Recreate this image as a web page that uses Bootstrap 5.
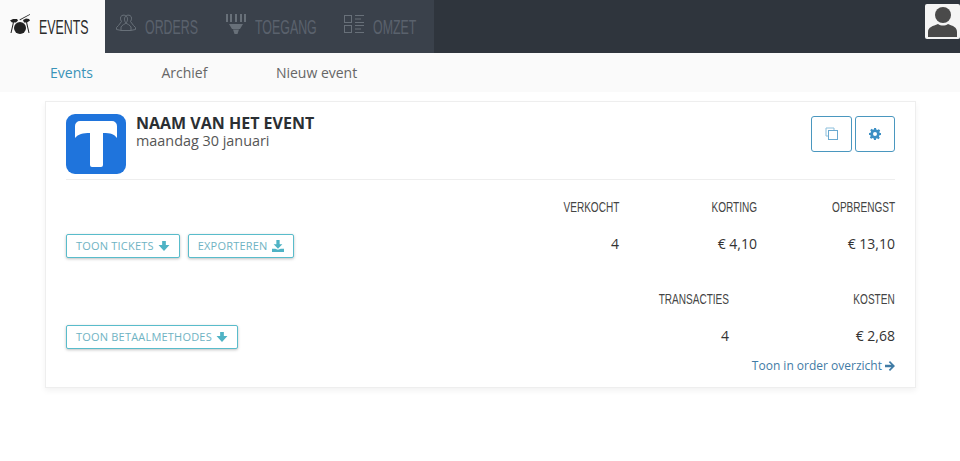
<!DOCTYPE html>
<html lang="nl">
<head>
    <meta charset="UTF-8">
    <meta name="viewport" content="width=device-width, initial-scale=1.0">
    <title>Events</title>
    <link rel="stylesheet" href="https://cdn.jsdelivr.net/npm/bootstrap@5.3.3/dist/css/bootstrap.min.css">
    <style>
        body {
            font-family: "Open Sans", "Liberation Sans", sans-serif;
            font-size: 14px;
            color: #333;
            background: #fff;
            height: 461px;
            overflow: hidden;
        }
        /* no condensed font installed, so squeeze Liberation Sans */
        .tab-label {
            display: block;
            font-family: "Liberation Sans", sans-serif;
            font-size: 21px;
            text-transform: uppercase;
            white-space: nowrap;
            transform: scaleX(.59);
            transform-origin: left center;
        }
        .label-events { width: 50px; }
        .label-orders { width: 54px; }
        .label-toegang { width: 62px; }
        .label-omzet { width: 45px; }
        .stat-label {
            display: inline-block;
            font-family: "Liberation Sans", sans-serif;
            font-size: 15px;
            line-height: 18px;
            color: #444;
            text-transform: uppercase;
            white-space: nowrap;
            transform: scaleX(.67);
            transform-origin: right center;
        }
        .top-bar {
            height: 53px;
            background: #2f353d;
        }
        .top-tabs {
            background: #3a414b;
        }
        .top-tab {
            height: 53px;
            color: #5a626d;
            text-decoration: none;
            padding: 0 16px 0 11px;
            gap: 9px;
        }
        .top-tab.is-active {
            background: #fafafa;
            color: #2b2b2b;
            width: 105px;
            padding-left: 10px;
        }
        .top-tab svg {
            margin-top: -6px;
            flex: none;
        }
        .avatar {
            width: 35px;
            height: 35px;
            background: #f5f5f5;
            border-radius: 2px;
            margin: 4px 0 0 auto;
        }
        .sub-bar {
            height: 39px;
            background: #fafafa;
            padding-left: 50px;
            gap: 68.5px;
        }
        .sub-bar a {
            color: #666;
            text-decoration: none;
        }
        .sub-bar a.is-active {
            color: #3a93b8;
        }
        .event-card {
            width: 871px;
            height: 287px;
            margin: 9px 0 0 45px;
            padding: 12px 20px 0;
            border: 1px solid #eee;
            box-shadow: 0 3px 6px rgba(0, 0, 0, .05);
        }
        .event-head {
            height: 66px;
            border-bottom: 1px solid #eee;
        }
        .event-logo {
            width: 60px;
            height: 60px;
            border-radius: 9px;
            background: #1f74dc;
        }
        .event-logo svg {
            margin-top: -1px;
        }
        .event-title {
            margin-left: 10px;
        }
        .event-name {
            font-size: 16px;
            font-weight: 700;
            line-height: 19px;
            color: #2b2f33;
        }
        .event-date {
            font-size: 14.4px;
            line-height: 16px;
            color: #555;
        }
        .head-actions {
            gap: 3px;
        }
        .square-btn {
            width: 41px;
            height: 36px;
            border: 1px solid #4a97bf;
            border-radius: 3px;
            background: #fff;
            margin-top: 2px;
        }
        .square-btn:last-child {
            width: 40px;
        }
        .teal-btn {
            height: 24px;
            padding: 0 9px;
            font-size: 11px;
            letter-spacing: .2px;
            color: #6fb3c3;
            background: #fff;
            border: 1px solid #59bccb;
            border-radius: 2px;
            box-shadow: 0 1px 3px rgba(0, 0, 0, .25);
            gap: 4px;
        }
        .stat-value {
            line-height: 18px;
            margin-top: 18px;
            padding-bottom: 5px;
        }
        .stat-col {
            width: 138px;
        }
        .stat-col-wide {
            width: 166px;
        }
        .row-one {
            margin-top: 16px;
        }
        .row-two {
            margin-top: 30px;
        }
        .row-two .stat-value {
            padding-bottom: 4px;
        }
        .order-link {
            font-size: 12px;
            line-height: 18px;
            color: #3f7ba5;
            text-decoration: none;
            margin-top: 8px;
            gap: 3px;
        }
    </style>
</head>
<body>

<nav class="top-bar d-flex">
    <div class="top-tabs d-flex">
        <a class="top-tab is-active d-flex align-items-center" href="#">
            <svg width="20" height="20" viewBox="0 0 20 20" fill="#222">
                <path d="M0 6.500L3 5h4l1 1.500L6 8.500H2z"/>
                <path d="M13 6l3-1.500 3 .5 1 1.500-3 2h-3z"/>
                <path d="M9.500 5.500L20 0l.2.700L10 6.300z"/>
                <circle cx="10" cy="14" r="6"/>
                <path d="M3 8l1 .3L1.500 19H.5zM17 8l-1 .3L18.500 19h1z"/>
            </svg>
            <span class="tab-label label-events">Events</span>
        </a>
        <a class="top-tab d-flex align-items-center" href="#">
            <svg width="20" height="20" viewBox="0 0 20 20" fill="none" stroke="#687079">
                <path d="M6 1.500a3.500 3.500 0 0 1 4 .5 3.500 3.500 0 0 1 4-.5c2 1 2 4 .5 6l3 4 2 2v2l-5 1"/>
                <path d="M10 2c2 1 2 5 0 7 1 1 4 2 5 4v3.500H5V13c1-2 4-3 5-4-2-2-2-6 0-7z"/>
                <path d="M6 1.500c-2 1-2 4-.5 6l-3 4-2 2v2l5 1"/>
            </svg>
            <span class="tab-label label-orders">Orders</span>
        </a>
        <a class="top-tab d-flex align-items-center" href="#">
            <svg width="20" height="20" viewBox="0 0 20 20" fill="#687079">
                <path d="M0 0h2v8H0zM4 0h2v8H4zM9 0h2v8H9zM14 0h2v8h-2zM18 0h2v8h-2z"/>
                <path d="M3 10h14l-3 5h-8zM7 15.500h6L11.500 20h-3z"/>
            </svg>
            <span class="tab-label label-toegang">Toegang</span>
        </a>
        <a class="top-tab d-flex align-items-center" href="#">
            <svg width="20" height="20" viewBox="0 0 20 20" fill="none" stroke="#687079">
                <rect x=".5" y="1.500" width="7" height="7"/>
                <rect x=".5" y="11.500" width="7" height="7"/>
                <path d="M11 1.500h9M11 5h6M11 8.500h9M11 11.500h9M11 15h6M11 18.500h9"/>
            </svg>
            <span class="tab-label label-omzet">Omzet</span>
        </a>
    </div>
    <div class="avatar overflow-hidden">
        <svg width="35" height="35" viewBox="0 0 35 35" fill="#4a4a4a">
            <circle cx="18" cy="11" r="8"/>
            <path d="M3 33v-5c0-5 5-6 10-8 3 2 7 2 10 0 5 2 9 3 9 8v5z"/>
        </svg>
    </div>
</nav>

<div class="sub-bar d-flex align-items-center">
    <a class="is-active" href="#">Events</a>
    <a href="#">Archief</a>
    <a href="#">Nieuw event</a>
</div>

<main class="event-card">
    <div class="event-head d-flex">
        <div class="event-logo d-flex align-items-center justify-content-center">
            <svg width="42" height="46" viewBox="0 0 42 46" fill="#fff">
                <path d="M5 0h32a5 5 0 0 1 5 5v12c-3-4-6-5-14-5v32a2 2 0 0 1-2 2h-9a2 2 0 0 1-2-2V12C8 12 3 13 0 17V5a5 5 0 0 1 5-5z"/>
            </svg>
        </div>
        <div class="event-title">
            <div class="event-name">NAAM VAN HET EVENT</div>
            <div class="event-date">maandag 30 januari</div>
        </div>
        <div class="head-actions ms-auto d-flex">
            <button class="square-btn d-flex align-items-center justify-content-center" type="button">
                <svg width="14" height="14" viewBox="0 0 14 14" fill="none" stroke="#8cbfdc">
                    <path d="M9 3V1H1v8h2"/>
                    <rect x="3.500" y="3.500" width="9" height="9" stroke="#6aa9d0"/>
                </svg>
            </button>
            <button class="square-btn d-flex align-items-center justify-content-center" type="button">
                <svg width="12" height="12" viewBox="0 0 12 12" fill="#3c8fc4">
                    <path fill-rule="evenodd" d="M5 0h2l.3 1.600 1.100.5L9.800 1.200l1.400 1.400-.9 1.400.5 1.100L12 5v2l-1.600.3-.5 1.100.9 1.400-1.400 1.400-1.400-.9-1.100.5L7 12H5l-.3-1.600-1.100-.5-1.400.9-1.400-1.400.9-1.400-.5-1.100L0 7V5l1.600-.3.5-1.100-.9-1.400 1.400-1.400 1.400.9 1.100-.5zM6 4a2 2 0 1 0 0 4 2 2 0 0 0 0-4z"/>
                </svg>
            </button>
        </div>
    </div>

    <div class="row-one d-flex align-items-end">
        <button class="teal-btn d-inline-flex align-items-center" type="button">TOON TICKETS
            <svg width="12" height="12" viewBox="0 0 11 11" fill="#4fb3c5"><path d="M3.800 1h3.400v3.500h3.300L5.500 10 .5 4.500h3.300z"/></svg>
        </button>
        <button class="teal-btn d-inline-flex align-items-center ms-2 me-auto" type="button">EXPORTEREN
            <svg width="12" height="12" viewBox="0 0 11 11" fill="#4fb3c5"><path d="M4 0h3v4h2.500L5.500 8 1.500 4H4zM0 8h3l2.500 1L8 8h3v3H0z"/></svg>
        </button>
        <div class="stat-col text-end">
            <div class="stat-label">Verkocht</div>
            <div class="stat-value">4</div>
        </div>
        <div class="stat-col text-end">
            <div class="stat-label">Korting</div>
            <div class="stat-value">€ 4,10</div>
        </div>
        <div class="stat-col text-end">
            <div class="stat-label">Opbrengst</div>
            <div class="stat-value">€ 13,10</div>
        </div>
    </div>

    <div class="row-two d-flex align-items-end">
        <button class="teal-btn d-inline-flex align-items-center me-auto" type="button">TOON BETAALMETHODES
            <svg width="12" height="12" viewBox="0 0 11 11" fill="#4fb3c5"><path d="M3.800 1h3.400v3.500h3.300L5.500 10 .5 4.500h3.300z"/></svg>
        </button>
        <div class="stat-col text-end">
            <div class="stat-label">Transacties</div>
            <div class="stat-value">4</div>
        </div>
        <div class="stat-col-wide text-end">
            <div class="stat-label">Kosten</div>
            <div class="stat-value">€ 2,68</div>
        </div>
    </div>

    <div class="d-flex justify-content-end">
        <a class="order-link d-inline-flex align-items-center" href="#">Toon in order overzicht
            <svg width="10" height="10" viewBox="0 0 10 10" fill="#3f7ba5"><path d="M5 0l5 5-5 5-1.200-1.200L6.400 6.300H0V3.700h6.400L3.800 1.200z"/></svg>
        </a>
    </div>
</main>

<script src="https://cdn.jsdelivr.net/npm/bootstrap@5.3.3/dist/js/bootstrap.bundle.min.js"></script>
</body>
</html>
